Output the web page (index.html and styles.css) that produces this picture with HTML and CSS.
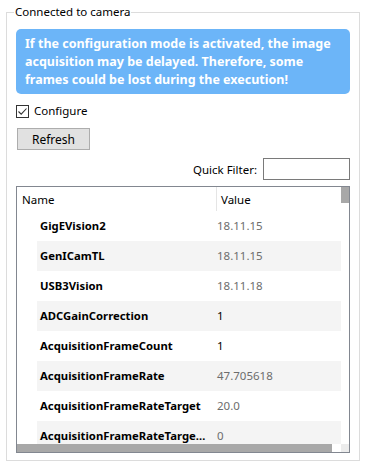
FILE: index.html
```html
<!DOCTYPE html>
<html lang="en">
<head>
  <meta charset="UTF-8">
  <title>Camera</title>
  <link rel="stylesheet" href="styles.css">
</head>
<body>
  <fieldset class="group">
    <legend>Connected to camera</legend>

    <div class="info">
      If the configuration mode is activated, the image acquisition may be delayed. Therefore, some frames could be lost during the execution!
    </div>

    <label class="check">
      <span class="box">
        <svg width="11" height="11" viewBox="0 0 11 11"><path d="M1.5 5.5 L4.2 8.2 L9.5 2.5" fill="none" stroke="#333" stroke-width="1.1"/></svg>
      </span>
      Configure
    </label>

    <button class="btn">Refresh</button>

    <div class="filter">
      <span>Quick Filter:</span>
      <input type="text" class="filter-input">
    </div>

    <div class="grid">
      <div class="grid-main">
        <div class="viewport">
          <div class="head">
            <div class="head-name">Name</div>
            <div class="head-value">Value</div>
          </div>
          <div class="row"><div class="name">GigEVision2</div><div class="value ro">18.11.15</div></div>
          <div class="row alt"><div class="name">GenICamTL</div><div class="value ro">18.11.15</div></div>
          <div class="row"><div class="name">USB3Vision</div><div class="value ro">18.11.18</div></div>
          <div class="row alt"><div class="name">ADCGainCorrection</div><div class="value">1</div></div>
          <div class="row"><div class="name">AcquisitionFrameCount</div><div class="value">1</div></div>
          <div class="row alt"><div class="name">AcquisitionFrameRate</div><div class="value ro">47.705618</div></div>
          <div class="row"><div class="name">AcquisitionFrameRateTarget</div><div class="value ro">20.0</div></div>
          <div class="row alt"><div class="name">AcquisitionFrameRateTargetEnable</div><div class="value ro">0</div></div>
        </div>
        <div class="vscroll"><div class="vthumb"></div></div>
      </div>
      <div class="hscroll">
        <div class="hthumb"></div>
        <div class="hrest"></div>
        <div class="corner"></div>
      </div>
    </div>
  </fieldset>
</body>
</html>
```

FILE: styles.css
```css
body {
  margin: 0;
  background: #fff;
  font-family: "Noto Sans", "Open Sans", sans-serif;
  font-size: 11.5px;
  color: #000;
}

.group {
  margin: 4px 6px 0;
  padding: 0 9px 7px;
  border: 1px solid #dcdcdc;
}

.group legend {
  margin-left: -2px;
  padding: 0 1px;
  line-height: 16px;
}

.info {
  margin-top: 9px;
  padding: 6px 9px 5px;
  background: #6cb5f8;
  border-radius: 5px;
  color: #fff;
  font-size: 12.5px;
  font-weight: bold;
  line-height: 18px;
}

.check {
  display: flex;
  align-items: center;
  gap: 5px;
  margin-top: 10px;
  height: 14px;
  line-height: 14px;
}

.check .box {
  width: 11px;
  height: 11px;
  border: 1px solid #333;
  display: flex;
}

.btn {
  display: block;
  margin: 10px 0 0 1px;
  width: 73px;
  height: 22px;
  background: #e1e1e1;
  border: 1px solid #adadad;
  color: #000;
  font-family: inherit;
  font-size: 12px;
  padding: 0;
}

.filter {
  display: flex;
  justify-content: flex-end;
  align-items: center;
  gap: 6px;
  margin-top: 8px;
}

.filter-input {
  width: 83px;
  height: 18px;
  border: 1px solid #7a7a7a;
  padding: 1px;
  margin: 0;
}

.grid {
  margin-top: 6px;
  border: 1px solid #828790;
}

.grid-main {
  display: flex;
}

.viewport {
  flex: 1;
  height: 257px;
  overflow: hidden;
}

.head {
  display: flex;
  height: 24px;
  line-height: 26px;
}

.head-name {
  width: 194px;
  padding-left: 5px;
  border-right: 1px solid #e5e5e5;
}

.head-value {
  padding-left: 4px;
}

.row {
  display: flex;
  height: 30px;
  line-height: 30px;
  margin-left: 20px;
}

.row.alt {
  background: #f4f4f4;
}

.name {
  width: 170px;
  padding: 0 6px 0 3px;
  font-size: 11.3px;
  font-weight: bold;
  white-space: nowrap;
  overflow: hidden;
  text-overflow: ellipsis;
}

.value {
  padding-left: 1px;
  color: #000;
}

.value.ro {
  color: #6d6d6d;
}

.vscroll {
  width: 8px;
  background: #fff;
}

.vthumb {
  height: 16px;
  background: #a8a8a8;
}

.hscroll {
  display: flex;
  height: 8px;
}

.hthumb {
  width: 315px;
  background: #a8a8a8;
}

.hrest {
  flex: 1;
  background: #fff;
}

.corner {
  width: 8px;
  background: #ececec;
}
```
